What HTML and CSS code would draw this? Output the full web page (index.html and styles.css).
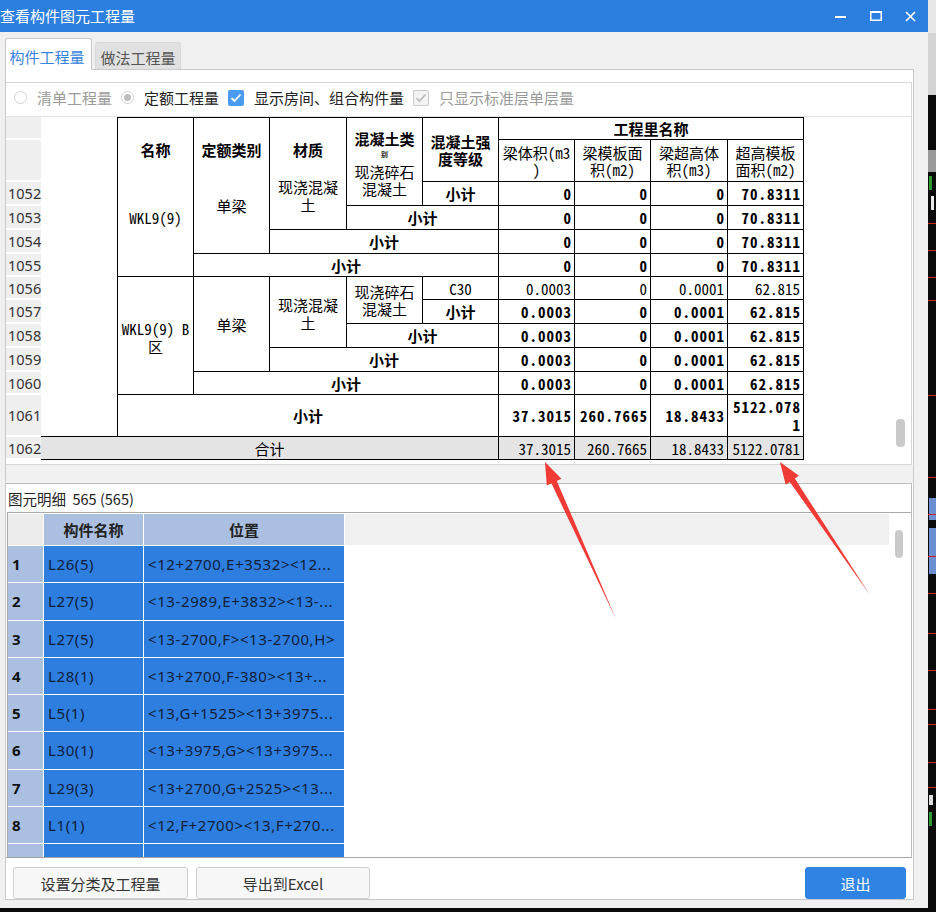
FILE: index.html
```html
<!DOCTYPE html>
<html lang="zh">
<head>
<meta charset="utf-8">
<title>查看构件图元工程量</title>
<link rel="stylesheet" href="styles.css">
</head>
<body>
<div class="screen">
  <div class="dialog">
    <div class="titlebar">
      <div class="title">查看构件图元工程量</div>
      <div class="winbtn"><svg width="11" height="11" viewBox="0 0 11 11"><rect x="0" y="5" width="11" height="2" fill="#fff"/></svg></div>
      <div class="winbtn"><svg width="12" height="10" viewBox="0 0 12 10"><rect x="0.75" y="1" width="10.5" height="8.25" fill="none" stroke="#fff" stroke-width="1.5"/><rect x="0" y="0" width="12" height="2" fill="#fff"/></svg></div>
      <div class="winbtn"><svg width="11" height="11" viewBox="0 0 11 11"><path d="M1 1 L10 10 M10 1 L1 10" stroke="#fff" stroke-width="1.7" fill="none"/></svg></div>
    </div>
    <div class="body">
      <div class="tabs">
        <div class="tab active">构件工程量</div>
        <div class="tab">做法工程量</div>
      </div>
      <div class="panel">
        <div class="upper">
          <div class="options">
            <span class="radio"></span><span class="olabel muted">清单工程量</span>
            <span class="radio on"></span><span class="olabel">定额工程量</span>
            <span class="check"><svg width="12" height="10" viewBox="0 0 12 10"><path d="M1.5 5 L4.5 8 L10.5 1.5" stroke="#fff" stroke-width="1.8" fill="none"/></svg></span><span class="olabel">显示房间、组合构件量</span>
            <span class="check dis"><svg width="12" height="10" viewBox="0 0 12 10"><path d="M1.5 5 L4.5 8 L10.5 1.5" stroke="#b9b9b9" stroke-width="1.6" fill="none"/></svg></span><span class="olabel muted">只显示标准层单层量</span>
          </div>
          <div class="grid-area">
            <div class="rownums">
              <div class="rn h23"></div>
              <div class="rn h42"></div>
              <div class="rn h24">1052</div>
              <div class="rn h24">1053</div>
              <div class="rn h24">1054</div>
              <div class="rn h23">1055</div>
              <div class="rn h23">1056</div>
              <div class="rn h24">1057</div>
              <div class="rn h24">1058</div>
              <div class="rn h24">1059</div>
              <div class="rn h23">1060</div>
              <div class="rn h42">1061</div>
              <div class="rn h23">1062</div>
            </div>
            <div class="qtable">
              <!-- header row 1 -->
              <div class="k blank rs12"></div>
              <div class="k t rs6 stack"><div class="seg h63 b">名称</div><div class="seg h72">WKL9(9)</div></div>
              <div class="k t rs5 stack"><div class="seg h63 b">定额类别</div><div class="seg h48">单梁</div></div>
              <div class="k t rs4 stack"><div class="seg h63 b">材质</div><div class="seg h30"><span class="wr w61 l18">现浇混凝土</span></div></div>
              <div class="k t rs3 stack"><div class="dh b">混凝土类</div><div class="dtiny b">别</div><div class="seg2"><span class="wr w61">现浇碎石混凝土</span></div></div>
              <div class="k t rs2 b"><span class="wr w61">混凝土强度等级</span></div>
              <div class="k t cs4 b">工程里名称</div>
              <!-- header row 2 -->
              <div class="k"><span class="wr w68">梁体积(m3)</span></div>
              <div class="k"><span class="wr w61">梁模板面积(m2)</span></div>
              <div class="k"><span class="wr w61">梁超高体积(m3)</span></div>
              <div class="k"><span class="wr w61">超高模板面积(m2)</span></div>
              <!-- 1052 -->
              <div class="k b">小计</div>
              <div class="k n b">0</div><div class="k n b">0</div><div class="k n b">0</div><div class="k n b">70.8311</div>
              <!-- 1053 -->
              <div class="k cs2 b">小计</div>
              <div class="k n b">0</div><div class="k n b">0</div><div class="k n b">0</div><div class="k n b">70.8311</div>
              <!-- 1054 -->
              <div class="k cs3 b">小计</div>
              <div class="k n b">0</div><div class="k n b">0</div><div class="k n b">0</div><div class="k n b">70.8311</div>
              <!-- 1055 -->
              <div class="k cs4 b">小计</div>
              <div class="k n b">0</div><div class="k n b">0</div><div class="k n b">0</div><div class="k n b">70.8311</div>
              <!-- 1056 -->
              <div class="k rs5"><span class="wr w68 l18 pt4">WKL9(9) B区</span></div>
              <div class="k rs4">单梁</div>
              <div class="k rs3"><span class="wr w61 l18 pt3">现浇混凝土</span></div>
              <div class="k rs2"><span class="wr w61">现浇碎石混凝土</span></div>
              <div class="k">C30</div>
              <div class="k n">0.0003</div><div class="k n">0</div><div class="k n">0.0001</div><div class="k n">62.815</div>
              <!-- 1057 -->
              <div class="k b">小计</div>
              <div class="k n b">0.0003</div><div class="k n b">0</div><div class="k n b">0.0001</div><div class="k n b">62.815</div>
              <!-- 1058 -->
              <div class="k cs2 b">小计</div>
              <div class="k n b">0.0003</div><div class="k n b">0</div><div class="k n b">0.0001</div><div class="k n b">62.815</div>
              <!-- 1059 -->
              <div class="k cs3 b">小计</div>
              <div class="k n b">0.0003</div><div class="k n b">0</div><div class="k n b">0.0001</div><div class="k n b">62.815</div>
              <!-- 1060 -->
              <div class="k cs4 b">小计</div>
              <div class="k n b">0.0003</div><div class="k n b">0</div><div class="k n b">0.0001</div><div class="k n b">62.815</div>
              <!-- 1061 -->
              <div class="k cs5 b">小计</div>
              <div class="k n b">37.3015</div><div class="k n b">260.7665</div><div class="k n b">18.8433</div><div class="k n b"><span class="wr w70 rt l18">5122.0781</span></div>
              <!-- 1062 -->
              <div class="k cs6 sum">合计</div>
              <div class="k n sum">37.3015</div><div class="k n sum">260.7665</div><div class="k n sum">18.8433</div><div class="k n sum">5122.0781</div>
            </div>
            <div class="fill"></div>
            <div class="vscroll"><div class="thumb"></div></div>
          </div>
        </div>
        <div class="splitter"></div>
        <div class="lower">
          <div class="label">图元明细&nbsp; 565 (565)</div>
          <div class="lgwrap">
            <div class="lg">
              <div class="lhn"></div><div class="lh">构件名称</div><div class="lh">位置</div><div class="lhf"></div>
              <div class="ln">1</div><div class="ld">L26(5)</div><div class="ld">&lt;12+2700,E+3532&gt;&lt;12...</div><div></div>
              <div class="ln">2</div><div class="ld">L27(5)</div><div class="ld">&lt;13-2989,E+3832&gt;&lt;13-...</div><div></div>
              <div class="ln">3</div><div class="ld">L27(5)</div><div class="ld">&lt;13-2700,F&gt;&lt;13-2700,H&gt;</div><div></div>
              <div class="ln">4</div><div class="ld">L28(1)</div><div class="ld">&lt;13+2700,F-380&gt;&lt;13+...</div><div></div>
              <div class="ln">5</div><div class="ld">L5(1)</div><div class="ld">&lt;13,G+1525&gt;&lt;13+3975...</div><div></div>
              <div class="ln">6</div><div class="ld">L30(1)</div><div class="ld">&lt;13+3975,G&gt;&lt;13+3975...</div><div></div>
              <div class="ln">7</div><div class="ld">L29(3)</div><div class="ld">&lt;13+2700,G+2525&gt;&lt;13...</div><div></div>
              <div class="ln">8</div><div class="ld">L1(1)</div><div class="ld">&lt;12,F+2700&gt;&lt;13,F+270...</div><div></div>
              <div class="ln"></div><div class="ld"></div><div class="ld"></div><div></div>
            </div>
            <div class="lsb"><div class="thumb"></div></div>
          </div>
        </div>
        <div class="btnrow">
          <div class="btn w175">设置分类及工程量</div>
          <div class="btn w174">导出到Excel</div>
          <div class="btn primary">退出</div>
        </div>
      </div>
    </div>
  </div>
  <div class="strip">
    <svg width="8" height="912" viewBox="0 0 8 912">
      <rect x="0" y="0" width="8" height="33" fill="#e6e6e6"/>
      <rect x="0" y="33" width="8" height="62" fill="#d4d4d4"/>
      <rect x="0" y="95" width="8" height="817" fill="#0b0b0b"/>
      <rect x="0" y="150" width="8" height="22" fill="#9a9a9a"/>
      <rect x="1" y="176" width="3" height="14" fill="#2a9a2a"/>
      <rect x="3" y="196" width="3" height="14" fill="#e8e8e8"/>
      <rect x="0" y="223" width="8" height="1" fill="#d42020"/>
      <rect x="0" y="250" width="8" height="1" fill="#d42020"/>
      <rect x="0" y="277" width="8" height="1" fill="#d42020"/>
      <rect x="0" y="300" width="8" height="1" fill="#d42020"/>
      <rect x="0" y="395" width="8" height="1" fill="#d42020"/>
      <rect x="0" y="477" width="8" height="1" fill="#d42020"/>
      <rect x="1" y="498" width="7" height="22" fill="#6b8fd0"/>
      <rect x="0" y="514" width="8" height="1" fill="#d42020"/>
      <rect x="1" y="528" width="7" height="46" fill="#6b8fd0"/>
      <rect x="0" y="556" width="8" height="1" fill="#d42020"/>
      <rect x="0" y="593" width="8" height="1" fill="#d42020"/>
      <rect x="0" y="633" width="8" height="1" fill="#d42020"/>
      <rect x="0" y="670" width="8" height="1" fill="#d42020"/>
      <rect x="0" y="709" width="8" height="1" fill="#d42020"/>
      <rect x="0" y="724" width="8" height="1" fill="#d42020"/>
      <rect x="0" y="762" width="8" height="1" fill="#d42020"/>
      <rect x="0" y="787" width="8" height="1" fill="#d42020"/>
      <rect x="1" y="795" width="4" height="10" fill="#dddddd"/>
      <rect x="1" y="812" width="3" height="14" fill="#2a9a2a"/>
    </svg>
  </div>
</div>
<svg class="annot" width="936" height="912" viewBox="0 0 936 912">
  <polygon points="545,462 561.4,478.8 556.8,480.9 616,619 551.4,483.3 546.8,485.4" fill="#f03a36"/>
  <polygon points="780,462 798.9,475.7 794.8,478.5 870,595 789.8,481.9 785.7,484.7" fill="#f03a36"/>
</svg>
</body>
</html>
```

FILE: styles.css
```css
* { box-sizing: border-box; }
html, body { margin: 0; padding: 0; }
body {
  position: relative;
  width: 936px;
  height: 912px;
  overflow: hidden;
  background: #0b0b0b;
  font-family: "Noto Sans CJK SC", "Noto Sans", sans-serif;
  font-size: 15px;
  color: #222;
}
.screen { display: flex; height: 912px; }
.dialog {
  flex: none;
  width: 928px;
  height: 908px;
  background: #f0f0f0;
  display: flex;
  flex-direction: column;
}
.strip { flex: 1; height: 912px; }
.strip svg { display: block; }

.titlebar {
  height: 32px;
  background: #2d7fdf;
  display: flex;
  align-items: center;
  color: #fff;
}
.title { flex: 1; font-size: 15px; line-height: 32px; white-space: nowrap; }
.winbtn { width: 35px; height: 32px; display: flex; align-items: center; justify-content: center; }
.winbtn svg { display: block; }

.body {
  flex: 1;
  padding: 6px 14px 8px 5px;
  display: flex;
  flex-direction: column;
}
.tabs {
  display: flex;
  gap: 3px;
  height: 31px;
  align-items: flex-end;
  position: relative;
  z-index: 1;
}
.tab {
  width: 86px;
  height: 27px;
  background: #e1e1e1;
  color: #555;
  border: 1px solid #d8d8d8;
  border-bottom: none;
  border-radius: 3px 3px 0 0;
  display: flex;
  align-items: center;
  justify-content: center;
  padding-top: 2px;
}
.tab.active {
  width: 87px;
  height: 32px;
  margin-bottom: -1px;
  background: #fff;
  color: #3884dc;
  border-color: #c8c8c8;
  padding-top: 3px;
  padding-right: 3px;
}
.panel {
  flex: 1;
  background: #fff;
  border: 1px solid #c9c9c9;
  display: flex;
  flex-direction: column;
  padding-top: 12px;
}

/* upper box */
.upper {
  height: 383px;
  margin-right: 1px;
  border: 1px solid #d6d6d6;
  border-left: none;
  display: flex;
  flex-direction: column;
}
.options {
  height: 33px;
  display: flex;
  align-items: center;
  padding-left: 8px;
  padding-bottom: 4px;
}
.olabel { margin-left: 10px; margin-right: 9px; white-space: nowrap; color: #222; }
.olabel.muted { color: #9a9a9a; }
.radio {
  width: 13px; height: 13px;
  border: 1px solid #d2d2d2;
  border-radius: 50%;
  background: #fff;
  display: flex; align-items: center; justify-content: center;
  flex: none;
}
.radio.on::after {
  content: "";
  width: 7px; height: 7px;
  border-radius: 50%;
  background: #bdbdbd;
}
.check {
  width: 16px; height: 16px;
  border-radius: 2px;
  background: #4a9bef;
  display: flex; align-items: center; justify-content: center;
  flex: none;
}
.check.dis { background: #f3f3f3; border: 1px solid #c9c9c9; }
.check svg { display: block; }

.grid-area {
  height: 348px;
  border-top: 1px solid #e2e2e2;
  display: flex;
}
.rownums { width: 35px; display: flex; flex-direction: column; flex: none; }
.rn {
  background: #efefef;
  border-bottom: 2px solid #fff;
  font-family: "Noto Sans", sans-serif;
  font-size: 14.5px;
  color: #333;
  padding-left: 2px;
  display: flex;
  align-items: center;
}
.h23 { height: 23px; }
.h24 { height: 24px; }
.h42 { height: 42px; }

.qtable {
  flex: none;
  align-self: flex-start;
  display: grid;
  grid-template-columns: 77px 76px 76px 77px 76px 76px 76px 76px 77px 76px;
  grid-template-rows: 23px 42px 24px 24px 24px 23px 23px 24px 24px 24px 23px 42px 23px;
  font-family: "Noto Sans Mono CJK SC", "Noto Sans CJK SC", monospace;
  font-size: 15px;
  color: #000;
}
.k {
  border-right: 1px solid #000;
  border-bottom: 1px solid #000;
  display: flex;
  align-items: center;
  justify-content: center;
  white-space: nowrap;
  line-height: 17px;
  background: #fff;
}
.k.t { border-top: 1px solid #000; }
.b { font-weight: 700; }
.n { justify-content: flex-end; padding-right: 3px; }
.n.b { letter-spacing: 1px; padding-right: 2px; }
.sum { background: #e4e4e4; font-weight: 400; }
.rs2 { grid-row: span 2; }
.rs3 { grid-row: span 3; }
.rs4 { grid-row: span 4; }
.rs5 { grid-row: span 5; }
.rs6 { grid-row: span 6; }
.rs12 { grid-row: span 12; }
.cs2 { grid-column: span 2; }
.cs3 { grid-column: span 3; }
.cs4 { grid-column: span 4; }
.cs5 { grid-column: span 5; }
.cs6 { grid-column: span 6; }
.stack { flex-direction: column; justify-content: flex-start; align-items: center; }
.seg { flex: none; align-self: stretch; display: flex; align-items: center; justify-content: center; }
.h63 { height: 63px; }
.h72 { height: 72px; }
.h48 { height: 48px; }
.h30 { height: 30px; }

.wr {
  display: block;
  white-space: normal;
  word-break: break-all;
  line-break: anywhere;
  text-align: center;
  line-height: 17px;
}
.w61 { width: 61px; }
.w68 { width: 68px; }
.w70 { width: 70px; }
.wr.rt { text-align: right; }
.l18 { line-height: 18px; }
.pt4 { padding-top: 4px; }
.pt3 { padding-top: 3px; }

.dh {
  flex: none;
  height: 29px;
  padding-top: 12px;
  line-height: 17px;
  text-align: center;
}
.dtiny {
  flex: none;
  height: 7px;
  margin-top: 4px;
  font-size: 7px;
  line-height: 7px;
  text-align: center;
  color: #111;
}
.seg2 { flex: none; padding-top: 5px; }

.fill { flex: 1; }
.vscroll { width: 15px; flex: none; padding: 302px 0 0 0; }
.thumb { width: 9px; height: 28px; border-radius: 4px; background: #c9c9c9; }

.splitter { height: 18px; background: #f1f1f1; flex: none; }

/* lower box */
.lower {
  height: 375px;
  margin-right: 1px;
  border: 1px solid #bdbdbd;
  border-left: none;
  border-bottom-color: #a4a4a4;
  display: flex;
  flex-direction: column;
  flex: none;
}
.label {
  height: 28px;
  display: flex;
  align-items: center;
  padding-left: 2px;
  font-size: 14.5px;
  color: #222;
  white-space: nowrap;
}
.lgwrap {
  height: 345px;
  margin-left: 1px;
  border-top: 1px solid #a9a9a9;
  border-left: 1px solid #a9a9a9;
  display: flex;
  overflow: hidden;
}
.lg {
  flex: 1;
  display: grid;
  grid-template-columns: 35px 99px 200px 1fr;
  grid-template-rows: 31px;
  grid-auto-rows: 36.25px;
  gap: 1px;
  padding-top: 1px;
  align-content: start;
  font-family: "Noto Sans", "Noto Sans CJK SC", sans-serif;
  font-size: 15px;
}
.lhn { background: #ececec; }
.lh {
  background: #abc0e1;
  font-family: "Noto Sans CJK SC", sans-serif;
  font-weight: 700;
  color: #222;
  display: flex; align-items: center; justify-content: center;
}
.lhf { background: #f0f0f0; }
.ln {
  background: #abc0e1;
  font-weight: 700;
  color: #111;
  display: flex; align-items: center;
  padding-left: 4px;
}
.ld {
  background: #2e7ee0;
  color: #10203a;
  display: flex; align-items: center;
  padding-left: 4px;
  white-space: nowrap;
  overflow: hidden;
  letter-spacing: 0.6px;
}
.lsb { width: 22px; flex: none; padding: 17px 0 0 6px; }
.lsb .thumb { width: 8px; }

.btnrow {
  flex: 1;
  display: flex;
  align-items: flex-end;
  padding-left: 7px;
  gap: 8px;
}
.btn {
  height: 32px;
  border: 1px solid #cfcfcf;
  border-radius: 3px;
  background: #f7f7f7;
  color: #333;
  font-size: 15px;
  display: flex;
  align-items: center;
  justify-content: center;
}
.w175 { width: 175px; }
.w174 { width: 174px; }
.btn.primary {
  width: 101px;
  margin-left: auto;
  margin-right: 7px;
  background: #2f84e3;
  border-color: #2f84e3;
  color: #fff;
}

.annot { position: absolute; left: 0; top: 0; pointer-events: none; }
```
